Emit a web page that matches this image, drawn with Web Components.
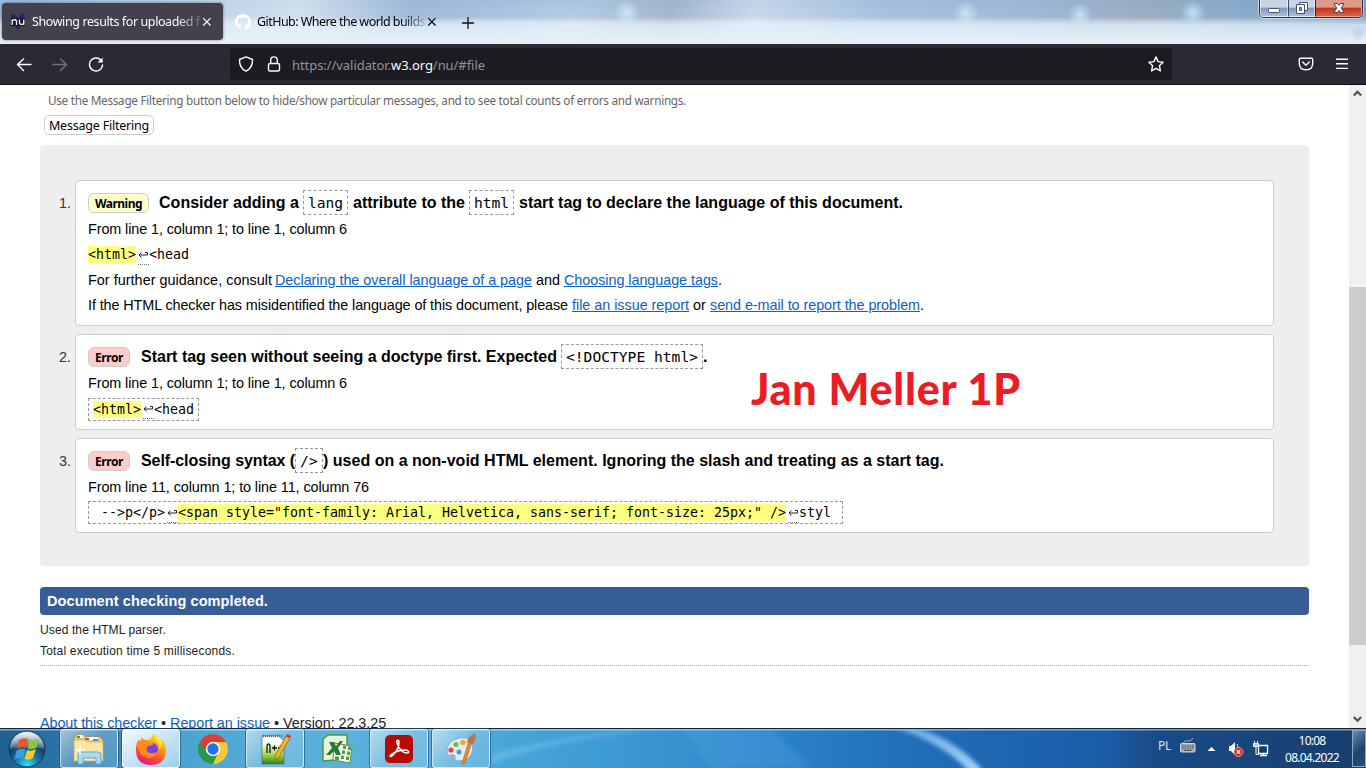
<!DOCTYPE html>
<html lang="en">
<head>
<meta charset="utf-8">
<title>Showing results for uploaded file</title>
<style>
html,body{margin:0;height:100%;overflow:hidden;background:#fff}
body{font-family:"Liberation Sans",Arial,sans-serif}
</style>
</head>
<body>
<desk-top></desk-top>
<script>
const define = (name, html) => customElements.define(name, class extends HTMLElement {
  constructor() {
    super();
    this.attachShadow({ mode: 'open' }).innerHTML = html;
  }
});

define('win-controls', `
<style>
:host{display:flex;width:104px;height:18px;margin-right:3px;box-sizing:border-box;border:1px solid #27364a;border-top:0;border-radius:0 0 5px 5px;overflow:hidden;box-shadow:0 0 0 1px #dbe8f5aa}
div{box-sizing:border-box;height:17px;border:1px solid #ffffff88;border-top:0;background:linear-gradient(#c6d4e4 0 45%,#7f99b8 50%,#a6bfdb);display:flex;justify-content:center}
.a{width:28px}.b{width:27px;border-left-color:#3c4e66}.c{flex:1;border-color:#e8a090;border-left-color:#4a1712;background:linear-gradient(#dd9a8b 0 45%,#bd3419 50%,#d8634b)}
</style>
<div class="a"><svg width="14" height="16"><rect x="1.500" y="8.500" width="11" height="4" rx=".8" fill="#fff" stroke="#485568"/></svg></div>
<div class="b"><svg width="14" height="16"><path d="M4.500 2.500h8v8h-8z" fill="#fff" stroke="#485568"/><path d="M1.500 4.500h8v9h-8z" fill="#fff" stroke="#485568"/><path d="M4.500 7.500h2v3h-2z" fill="#8ea5c2" stroke="#485568"/></svg></div>
<div class="c"><svg width="14" height="16"><path d="M2 3.500h3.500L7 5.500l1.500-2H12L9.300 8l2.700 4.500H8.500L7 10.500l-1.500 2H2L4.700 8z" fill="#fff" stroke="#54404a"/></svg></div>
`);

define('browser-tab', `
<style>
:host{display:flex;align-items:center;box-sizing:border-box;width:221px;height:37px;padding-left:8px;border-radius:4px;color:#000;font:12.500px "Noto Sans","Open Sans",sans-serif}
:host([active]){background:#42414d;color:#fbfbfe;box-shadow:0 0 3px #0007}
.t{width:168px;margin-left:6px;overflow:hidden;-webkit-mask-image:linear-gradient(90deg,#000 145px,transparent 174px);mask-image:linear-gradient(90deg,#000 145px,transparent 174px)}
.i{width:16px;height:16px;display:flex}
.x{margin-left:2px}
</style>
<span class="i"><slot name="icon"></slot></span><span class="t"><slot></slot></span>
<svg class="x" width="10" height="10" fill="none" stroke="currentColor" stroke-width="1.200"><path d="M1.200 1.200l7.300 7.300M8.500 1.200L1.200 8.500"/></svg>
`);

define('tab-strip', `
<style>
:host{display:flex;height:44px;box-sizing:border-box;padding-left:2px;
background:radial-gradient(circle at 627px 13px,#d8efffcc 0,#d8efff00 13px),radial-gradient(circle at 966px 14px,#d8efffbb 0,#d8efff00 13px),radial-gradient(circle at 1080px 15px,#cdeeffcc 0,#cdeeff00 12px),radial-gradient(circle at 1193px 13px,#c5eaffdd 0,#c5eaff00 13px),radial-gradient(circle at 1358px 33px,#b5c5e4aa 0,#b5c5e400 8px),radial-gradient(ellipse at 108px 0,#b3aea1aa 0,#b3aea100 13px),
linear-gradient(#e0ecf800 0 17px,#e0ecf8c0 25px,#e6f0faf0 40px),
linear-gradient(100deg,#6fa0d455 0,#ffffff66 22%,#7c9cc255 30%,#9eb9d800 42%,#8392a555 49%,#ffffff44 55%,#8fabd044 64%,#6f8db744 74%,#7e8c9c77 84%,#4f7da866 90%,#4f7da888 100%),
linear-gradient(#a9c4e2 0,#b8cce2 40%,#d6e3f1 55%,#dce8f5 100%)}
.tabs{display:flex;padding-top:3px}
.plus{margin:14px 0 0 13px}
.sp{flex:1}
</style>
<div class="tabs">
<browser-tab active style="margin-right:4px"><svg slot="icon" width="16" height="16"><path d="M1 0h3l4 4 4-4h3l-1 5-3 7-3 4-3-4-3-7z" fill="#27236b"/><path d="M1 4h14v8H1z" fill="#15152b"/><path d="M2.200 11V5.500M2.200 7q4.300-3 4.300 1v3M9.500 5.500V9q.8 2.700 4.300.5M13.800 5.500V11" fill="none" stroke="#fff" stroke-width="1.300"/></svg><x-t w="180">Showing results for uploaded file</x-t></browser-tab>
<browser-tab><svg slot="icon" width="16" height="16" viewBox="0 0 16 16"><path fill="#fff" d="M8 0C3.580 0 0 3.580 0 8c0 3.540 2.290 6.530 5.470 7.590.4.070.55-.17.55-.38v-1.490c-2.010.37-2.530-.49-2.690-.94-.09-.23-.48-.94-.82-1.130-.28-.15-.68-.52-.01-.53.63-.01 1.080.58 1.230.82.720 1.210 1.870.87 2.330.66.070-.52.280-.87.510-1.070-1.780-.2-3.640-.89-3.640-3.950 0-.87.310-1.590.820-2.150-.08-.2-.36-1.020.08-2.120 0 0 .670-.21 2.200.82a7.600 7.600 0 0 1 4 0c1.530-1.040 2.200-.82 2.200-.82.440 1.100.160 1.920.080 2.120.510.560.820 1.270.820 2.150 0 3.070-1.870 3.750-3.650 3.950.290.250.540.730.540 1.480v2.200c0 .210.150.460.550.380A8 8 0 0 0 16 8c0-4.420-3.580-8-8-8z"/></svg><x-t w="168">GitHub: Where the world builds</x-t></browser-tab>
</div>
<svg class="plus" width="14" height="18" stroke="#111" stroke-width="1.300"><path d="M7 3v12M1 9h12"/></svg>
<div class="sp"></div><win-controls></win-controls>
`);

define('nav-bar', `
<style>
:host{display:flex;align-items:center;height:41px;box-sizing:border-box;background:#2b2a33;border-bottom:1px solid #0c0c0d;padding-left:16px;color:#fbfbfe}
svg{display:block;fill:none;stroke:#fbfbfe;stroke-width:1.400;stroke-linecap:round;stroke-linejoin:round}
.n{display:flex;gap:20px;width:214px}
.url{width:942px;height:32px;border-radius:4px;background:#1c1b22;display:flex;align-items:center;padding:0 8px;box-sizing:border-box;font:13px "Noto Sans","Open Sans",sans-serif;color:#95949b}
.url b{font-weight:400;color:#fbfbfe}
.url svg:first-child{margin-right:12px}.txt{margin:1px 0 0 10px;flex:1}
.p{margin-left:126px}.m{margin-left:20px}
</style>
<div class="n">
<svg width="16" height="16"><path d="M15 8.500H2M7.500 3L1.500 8.500l6 6"/></svg>
<svg width="16" height="16" style="stroke:#737279"><path d="M1 8.500h13M8.500 3l6 5.500-6 6"/></svg>
<svg width="16" height="16"><path d="M13.800 5.500A6.500 6.500 0 1 0 14.500 9"/><path d="M14.600 1.500v5h-5z" fill="#fbfbfe" stroke="none"/></svg>
</div>
<div class="url">
<svg width="16" height="16"><path d="M8 .9l6.500 2.600C14.700 9 12.600 13 8 15.200 3.400 13 1.300 9 1.500 3.500z"/></svg>
<svg width="16" height="16"><rect x="2.500" y="7.500" width="11" height="7.500" rx="1.500"/><path d="M4.700 7V4.200a3.300 3.300 0 0 1 6.600 0V7"/></svg>
<span class="txt"><x-t w="193">https://validator.<b>w3.org</b>/nu/#file</x-t></span>
<svg width="16" height="16"><path d="M8 .9l2.100 4.700 5 .6-3.700 3.500 1 5.200L8 12.300l-4.400 2.600 1-5.200L.9 6.200l5-.6z"/></svg>
</div>
<svg class="p" width="16" height="16"><path d="M2.300 2.200h11.400q1 0 1 1v4q0 6.600-6.700 6.600t-6.700-6.600v-4q0-1 1-1zM4.700 6L8 9.200 11.300 6"/></svg>
<svg class="m" width="16" height="16" style="stroke-linecap:butt"><path d="M2 3.200h12M2 7.800h12M2 12.400h12"/></svg>
`);

define('scroll-bar', `
<style>
:host{display:flex;flex-direction:column;align-items:center;width:17px;height:643px;background:#f0f0f0}
svg{display:block;fill:none;stroke:#505050;stroke-width:2.200}
.th{width:17px;height:358px;background:#cdcdcd;margin-top:185px}
.s{flex:1}
</style>
<svg width="17" height="17"><path d="M4.800 10.500l3.700-3.700 3.700 3.700"/></svg><div class="th"></div><div class="s"></div>
<svg width="17" height="17"><path d="M4.800 6l3.700 3.700L12.200 6"/></svg>
`);

define('code-chip', `
<style>
:host{display:flex;align-items:center;box-sizing:border-box;font:14.600px "DejaVu Sans Mono",monospace;height:25px;border:1px dashed #999;padding:0 4px;align-self:flex-start}
</style><slot></slot>`);

define('code-extract', `
<style>
:host{display:flex;align-items:center;height:23px;box-sizing:border-box;width:fit-content;font:13.290px "DejaVu Sans Mono",monospace}
:host([boxed]){border:1px dashed #999;padding:0 4px}
</style><slot></slot>`);

define('line-break', `
<style>
:host{display:block;width:11px;height:17px;margin:3px 0 0 2px;border-bottom:1px dotted #777;box-sizing:border-box}
svg{display:block}
</style><svg width="11" height="15" fill="none" stroke="#222"><path d="M3.500 4.500L1 7l2.500 2.500M1 7h8.500V4.500H7"/></svg>`);

define('high-light', `
<style>:host{display:block;height:17px;line-height:17px;background:#ffff80}</style><slot></slot>`);

define('msg-item', `
<style>
:host{display:flex;margin-bottom:8px;color:#000;font-size:14.400px}
.num{width:35px;box-sizing:border-box;padding-left:19px;line-height:17px;padding-top:15px;color:#333}
.box{flex:1;box-sizing:border-box;background:#fff;border:1px solid #ccc;border-radius:4px;padding:9px 12px 7px}
.head{display:flex;align-items:center;height:26px;font-weight:700;font-size:16px}
.badge{display:flex;align-items:center;justify-content:center;box-sizing:border-box;height:20px;border:1px solid #ccc;border-radius:6px;font:700 12px "Noto Sans","Open Sans",sans-serif;padding-top:1px;margin-right:11px}
:host([kind=warning]) .badge{background:#ffc;width:61px;margin-right:10px}
:host([kind=error]) .badge{background:#fcc;width:42px}
</style>
<div class="num"><slot name="num"></slot></div>
<div class="box"><div class="head"><span class="badge"><slot name="badge"></slot></span><slot name="head"></slot></div><slot></slot></div>
`);

define('results-page', `
<style>
:host{display:block;flex:1;height:643px;overflow:hidden;background:#fff;color:#222;position:relative}
a{color:#0b61c4;text-decoration:underline;text-underline-offset:1px}
.hint{font:11.700px/18px "Noto Sans","Open Sans",sans-serif;color:#666;padding:6px 0 0 48px;height:30px;box-sizing:border-box}
.btn{display:flex;align-items:center;justify-content:center;width:110px;height:20px;margin-left:44px;box-sizing:border-box;border:1px solid #ccc;border-radius:5px;font:12.500px "Noto Sans","Open Sans",sans-serif;color:#000}
.list{margin:10px 0 0 40px;width:1269px;height:421px;box-sizing:border-box;padding:35px 35px 0 0;background:#eee;border-radius:4px}
.row{display:flex;align-items:center;height:25px}
.from{margin-bottom:1px}
.done{margin:21px 0 0 40px;width:1269px;height:28px;box-sizing:border-box;border-radius:4px;background:#365d95;color:#fff;font-weight:700;font-size:14.500px;display:flex;align-items:center;padding-left:7px}
.foot{margin-left:40px;width:1269px;font-size:12px;padding-top:5px;border-bottom:1px dotted #aaa;line-height:21px;height:45px}
.foot div{height:21px}
.about{display:flex;padding:48px 0 0 40px;font-size:14.400px;line-height:18px;gap:4px}
.name{position:absolute;left:751px;top:275px;font:900 43px/58px Lato,sans-serif;color:#ed1c24}
</style>
<div class="hint"><x-t w="638">Use the Message Filtering button below to hide/show particular messages, and to see total counts of errors and warnings.</x-t></div>
<div class="btn"><x-t w="100">Message Filtering</x-t></div>
<div class="list">
<msg-item kind="warning"><span slot="num">1.</span><x-t slot="badge" w="47">Warning</x-t>
<x-t slot="head" w="140">Consider adding a</x-t><code-chip slot="head" style="margin:0 5px 0 4px"><x-t w="35">lang</x-t></code-chip><x-t slot="head" w="112">attribute to the</x-t><code-chip slot="head" style="margin:0 5px 0 4px"><x-t w="35">html</x-t></code-chip><x-t slot="head" w="384">start tag to declare the language of this document.</x-t>
<div class="row from"><x-t w="259">From line 1, column 1; to line 1, column 6</x-t></div>
<div class="row"><code-extract><high-light><x-t w="48">&lt;html&gt;</x-t></high-light><line-break></line-break><x-t w="40">&lt;head</x-t></code-extract></div>
<div class="row"><x-t w="184">For further guidance, consult</x-t><a href="#" style="margin:0 4px 0 3px"><x-t w="257">Declaring the overall language of a page</x-t></a><x-t w="24">and</x-t><a href="#" style="margin-left:4px"><x-t w="154">Choosing language tags</x-t></a><span>.</span></div>
<div class="row" style="margin-bottom:1px"><x-t w="480">If the HTML checker has misidentified the language of this document, please</x-t><a href="#" style="margin:0 4px"><x-t w="117">file an issue report</x-t></a><x-t w="13">or</x-t><a href="#" style="margin-left:4px"><x-t w="210">send e-mail to report the problem</x-t></a><span>.</span></div>
</msg-item>
<msg-item kind="error"><span slot="num">2.</span><x-t slot="badge" w="28">Error</x-t>
<x-t slot="head" w="416">Start tag seen without seeing a doctype first. Expected</x-t><code-chip slot="head" style="margin:0 0 0 4px"><x-t w="132">&lt;!DOCTYPE html&gt;</x-t></code-chip><span slot="head">.</span>
<div class="row from"><x-t w="259">From line 1, column 1; to line 1, column 6</x-t></div>
<div class="row" style="height:26px"><code-extract boxed><high-light><x-t w="48">&lt;html&gt;</x-t></high-light><line-break></line-break><x-t w="40">&lt;head</x-t></code-extract></div>
</msg-item>
<msg-item kind="error"><span slot="num">3.</span><x-t slot="badge" w="28">Error</x-t>
<x-t slot="head" w="154">Self-closing syntax (</x-t><code-chip slot="head"><x-t w="18">/&gt;</x-t></code-chip><x-t slot="head" w="621">) used on a non-void HTML element. Ignoring the slash and treating as a start tag.</x-t>
<div class="row from"><x-t w="281">From line 11, column 1; to line 11, column 76</x-t></div>
<div class="row"><code-extract boxed style="width:755px"><x-t w="64" style="margin-left:8px">--&gt;p&lt;/p&gt;</x-t><line-break></line-break><high-light><x-t w="608">&lt;span style="font-family: Arial, Helvetica, sans-serif; font-size: 25px;" /&gt;</x-t></high-light><line-break></line-break><x-t w="32">styl</x-t></code-extract></div>
</msg-item>
</div>
<div class="done"><x-t w="221">Document checking completed.</x-t></div>
<div class="foot"><div><x-t w="126">Used the HTML parser.</x-t></div><div><x-t w="195">Total execution time 5 milliseconds.</x-t></div></div>
<div class="about"><a href="#"><x-t w="117">About this checker</x-t></a><span>•</span><a href="#"><x-t w="100">Report an issue</x-t></a><span>•</span><x-t w="103">Version: 22.3.25</x-t></div>
<div class="name"><x-t w="270">Jan Meller 1P</x-t></div>
`);

define('task-button', `
<style>
:host{display:flex;align-items:center;justify-content:center;width:58px;height:39px;box-sizing:border-box;border:1px solid transparent;border-radius:3px}
:host([open]){border-color:#e3f3fccc;background:linear-gradient(135deg,#ffffff90,#ffffff33 50%,#ffffff22);box-shadow:0 0 0 1px #1b4a6d99}
:host([front]){border-color:#fff;background:linear-gradient(150deg,#f2fafe,#c2e2f2 55%,#9dd0ea)}
</style><slot></slot>`);

define('task-bar', `
<style>
:host{display:flex;height:40px;box-sizing:border-box;border-top:1px solid #0d2238;position:relative;
background:linear-gradient(#ffffff77 0 1px,#ffffff00 2px),linear-gradient(90deg,#1f6090 0,#2b75a8 60px,#4ba3d2 180px,#5ab1dc 330px,#59afdc 440px,#46a5d8 510px,#3a97d2 640px,#2e86ca 760px,#2273bb 880px,#1d66b0 1000px,#1a5ca6 1110px,#1a4b86 1150px,#173e6e 1366px)}
.glow{position:absolute;left:492px;top:1px}
.start{width:60px;display:flex;justify-content:center;padding-right:6px;box-sizing:border-box}
.apps{display:flex;gap:4px}.sp{flex:1}
.tray{display:flex;align-items:center;color:#fff;font:12px/17px "Noto Sans","Open Sans",sans-serif}
.clock{display:flex;flex-direction:column;align-items:center;width:56px;margin:0 12px 0 15px}
.peek{width:14px;height:37px;align-self:flex-start;margin-top:1px;box-sizing:border-box;border:1px solid #87a9c4;background:linear-gradient(135deg,#6a8bab,#1d4570 55%,#244e7b)}
svg{display:block}
</style>
<svg class="glow" width="620" height="38"><defs><filter id="b" x="-20%" y="-20%" width="140%" height="140%"><feGaussianBlur stdDeviation="2"/></filter><linearGradient id="g" x2="0" y2="1"><stop stop-color="#8cc4f0" stop-opacity=".7"/><stop offset="1" stop-color="#a5d4f8"/></linearGradient></defs><g filter="url(#b)"><path d="M0 34Q60 10 160 0h-30Q50 10 0 24z" fill="#8fd0f0" opacity=".35"/><path d="M190 0h90l40 38h-100z" fill="#6ab4ea" opacity=".2"/><path d="M398 -4Q450 12 478 42h14Q466 10 420 -4z" fill="url(#g)"/></g></svg>
<div class="start"><svg width="42" height="39" viewBox="0 0 42 39"><defs><radialGradient id="o" cx=".5" cy=".95" r=".95"><stop offset="0" stop-color="#30e0ff"/><stop offset=".35" stop-color="#1378a8"/><stop offset=".65" stop-color="#123f66"/><stop offset="1" stop-color="#a9c1d2"/></radialGradient><linearGradient id="s" x2="0" y2="1"><stop stop-color="#fff" stop-opacity=".85"/><stop offset="1" stop-color="#fff" stop-opacity=".15"/></linearGradient></defs><circle cx="21" cy="20" r="18" fill="url(#o)" stroke="#123a59"/><path d="M4 20a17 17 0 0 1 34 0q-17-5-34 0z" fill="url(#s)"/><path d="M13 11q4-3 9-1l-2 9q-4-2-9 1z" fill="#e65a24"/><path d="M23.500 10.500q5 2 10-1l-3 9q-4 3-9 1z" fill="#8cc63c"/><path d="M10.500 21.500q5-3 9-1l-2.500 9q-4-2-8.500 1z" fill="#3f9fdc"/><path d="M21 21q4 2 9-1l-3 9q-4 3-8.500 1z" fill="#fbc52d"/></svg></div>
<div class="apps">
<task-button open><svg width="34" height="34" viewBox="0 0 34 34"><path d="M2 6l2-3h8l2 2h14l3 3v21H2z" fill="#e8cc76" stroke="#b8933d"/><path d="M6 3h5v3H6zM15 5h11v3H15z" fill="#fff"/><path d="M5 4h3v2H5z" fill="#2ca33c"/><path d="M13 6h4v2h-4z" fill="#d44"/><path d="M21 7h5v2h-5z" fill="#39d"/><path d="M2 8h11l2 2h16v19H2z" fill="#f8e7a6" stroke="#cba95a" stroke-width=".7"/><path d="M6 32v-9q0-3 3-3h17q3 0 3 3v9h-5v-6H11v6z" fill="#a9dcf3" stroke="#5aa9d0"/><path d="M8 14v9M4 18h9" stroke="#fff" stroke-width="1.300"/></svg></task-button>
<task-button open front><svg width="34" height="34" viewBox="0 0 34 34"><defs><linearGradient id="f" x1=".8" x2=".3" y2="1"><stop stop-color="#fff044"/><stop offset=".4" stop-color="#ff980e"/><stop offset=".7" stop-color="#ff4a3a"/><stop offset="1" stop-color="#e31587"/></linearGradient></defs><path d="M2 18Q2 11 5 7l1 3 2-5q1 3 4 3l5-1q0-4 4-6 0 3 3 5l3 3q0-2-1-3 6 5 6 12 0 15-15 15T2 18z" fill="url(#f)"/><circle cx="18" cy="17" r="6" fill="#7542e5"/><path d="M3 12q6-6 12-2l5 2q-2 2-6 2-2 2-1 5 3 4 9 1 0 6-8 6-10-2-11-14z" fill="#ff8a16"/><path d="M20 2q-1 4 3 7 3 3 2 8 4-2 3-8z" fill="#ffe83b"/></svg></task-button>
<task-button><svg width="32" height="32" viewBox="0 0 32 32"><path d="M16 16V9h13.200A15 15 0 0 1 16 31z" fill="#fcc934"/><path d="M16 31A15 15 0 0 1 3 8.500L10 20l6 3 5-3z" fill="#279847"/><path d="M3 8.500A15 15 0 0 1 29 9H16L8 17z" fill="#e33b2e"/><circle cx="16" cy="16" r="7.200" fill="#fff"/><circle cx="16" cy="16" r="5.700" fill="#2671e8"/></svg></task-button>
<task-button open><svg width="34" height="34" viewBox="0 0 34 34"><defs><linearGradient id="n" x2="0" y2="1"><stop offset=".25" stop-color="#fff"/><stop offset=".65" stop-color="#a5e04c"/><stop offset="1" stop-color="#2c7d16"/></linearGradient></defs><path d="M4 4h17l5 5v23H4z" fill="url(#n)" stroke="#666" stroke-width=".7"/><path d="M5 4h20" stroke="#666" stroke-width="2.500" stroke-dasharray="1 1"/><path d="M9 21v-7q0-2 1.500-2T12 14v7M14 16h5M16.500 13.500v5M20 16h5M22.500 13.500v5" fill="none" stroke="#111" stroke-width="1.300"/><path d="M28 4l4 2-11 19-4 3 .5-5z" fill="#f4b62f" stroke="#9a621b" stroke-width=".8"/><path d="M28 4l1-2 4 2-1 2z" fill="#c3343a"/></svg></task-button>
<task-button><svg width="34" height="34" viewBox="0 0 34 34"><path d="M8 3h19v24l-24 2V7z" fill="#e8f4df" stroke="#4d963c" stroke-width="1.500"/><path d="M14 11l18 3-2 17-17-3z" fill="#f6fbf2" stroke="#579547"/><path d="M23 15l3 .4M28 16l3 .4M22 20l3 .4M27 21l3 .4M21 25l3 .4M26 26l3 .4M15 26l4 .4" stroke="#569a42" stroke-width="3.500"/><path d="M9 10h5l2 4 4-5h3l-5 7 3 7h-5l-2-4-4 4H6l6-7z" fill="#287c36"/></svg></task-button>
<task-button open><svg width="28" height="28" viewBox="0 0 28 28"><rect width="28" height="28" rx="5" fill="#b50b00"/><path d="M6 20c5-1 8-8 8-13 0-3-3-2-2 1 2 6 6 10 10 10 3 0 2-3-2-3-5 0-10 2-13 4-3 2-2 4 1 1 4-4 6-9 6-13" fill="none" stroke="#fff" stroke-width="1.500"/></svg></task-button>
<task-button open><svg width="34" height="34" viewBox="0 0 34 34"><path d="M3 20Q2 9 15 6q14-2 14 9-1 15-16 14-3 0-2-4 0-3-4-2-4 1-4-3z" fill="#e1edf6" stroke="#8aa8c2"/><circle cx="7" cy="18" r="2.600" fill="#e44"/><circle cx="12" cy="12.500" r="2.600" fill="#6bc442"/><circle cx="19" cy="10.500" r="2.800" fill="#f2a53a"/><circle cx="15" cy="20" r="2.500" fill="#4a9bd0"/><path d="M27 13l-6 18-3 1 1-4 5-16z" fill="#e98a2d" stroke="#b35d17" stroke-width=".6"/><path d="M23 11q0-6 8-10 2 7-3 12z" fill="#b5794a"/></svg></task-button>
</div><div class="sp"></div>
<div class="tray"><x-t w="13" style="margin:-6px 9px 0 0;color:#d5e3f0">PL</x-t>
<svg width="16" height="18" style="margin-top:-5px"><path d="M3 6q2-3 5-2t5-3" fill="none" stroke="#aab3bd"/><rect x=".5" y="6.500" width="14.500" height="8.500" rx="1" fill="#a3a8ac" stroke="#d0d3d5"/><path d="M2 9h12M2 11h12" stroke="#41474e" stroke-dasharray="1.500 1"/><path d="M4 13.300h8" stroke="#41474e"/></svg>
<svg width="9" height="6" style="margin-left:11px"><path d="M.5 5L4.500 1l4 4z" fill="#fff"/></svg>
<svg width="16" height="16" style="margin-left:12px;margin-top:1px"><path d="M1 5h2l4-4v13L3 10H1z" fill="#fff"/><path d="M9 3q3 4 0 8" stroke="#cdd8e4" fill="none"/><circle cx="10.500" cy="11" r="4.500" fill="#d6281f" stroke="#f0948e"/><path d="M8.800 9.300l3.400 3.400m0-3.400l-3.400 3.400" stroke="#fff" stroke-width="1.500"/></svg>
<svg width="16" height="16" style="margin-left:9px" fill="none" stroke="#fff"><path d="M5.500 4.500h9v8h-9z" fill="#173a63" stroke-width="1.300"/><path d="M7 14.500h7M10 12v3" stroke-width="1.400"/><path d="M1.500 0v2M4.500 0v2" /><path d="M.5 2.500h5v3h-5z" fill="#b9c6d4"/><path d="M3 6v7.500h3"/></svg>
<div class="clock"><x-t w="27">10:08</x-t><x-t w="54">08.04.2022</x-t></div>
<div class="peek"></div></div>
`);

define('desk-top', `
<style>
:host{display:flex;flex-direction:column;width:1366px;height:768px;overflow:hidden}
.mid{display:flex;height:643px}
</style>
<tab-strip></tab-strip><nav-bar></nav-bar>
<div class="mid"><results-page></results-page><scroll-bar></scroll-bar></div>
<task-bar></task-bar>
`);

// A single line of text whose letter spacing is adjusted to fill the width in its w attribute.
customElements.define('x-t', class extends HTMLElement {
  connectedCallback() {
    if (this.shadowRoot) return;
    const w = +this.getAttribute('w');
    this.attachShadow({ mode: 'open' }).innerHTML =
      `<style>:host{display:block;white-space:pre;width:${w}px;text-decoration:inherit}span{display:inline-block;text-decoration:inherit}</style><span><slot></slot></span>`;
    const s = this.shadowRoot.querySelector('span');
    s.style.letterSpacing = '0px';
    const n = this.textContent.length;
    s.style.letterSpacing = ((w - s.getBoundingClientRect().width) / n).toFixed(4) + 'px';
  }
});
</script>
</body>
</html>
